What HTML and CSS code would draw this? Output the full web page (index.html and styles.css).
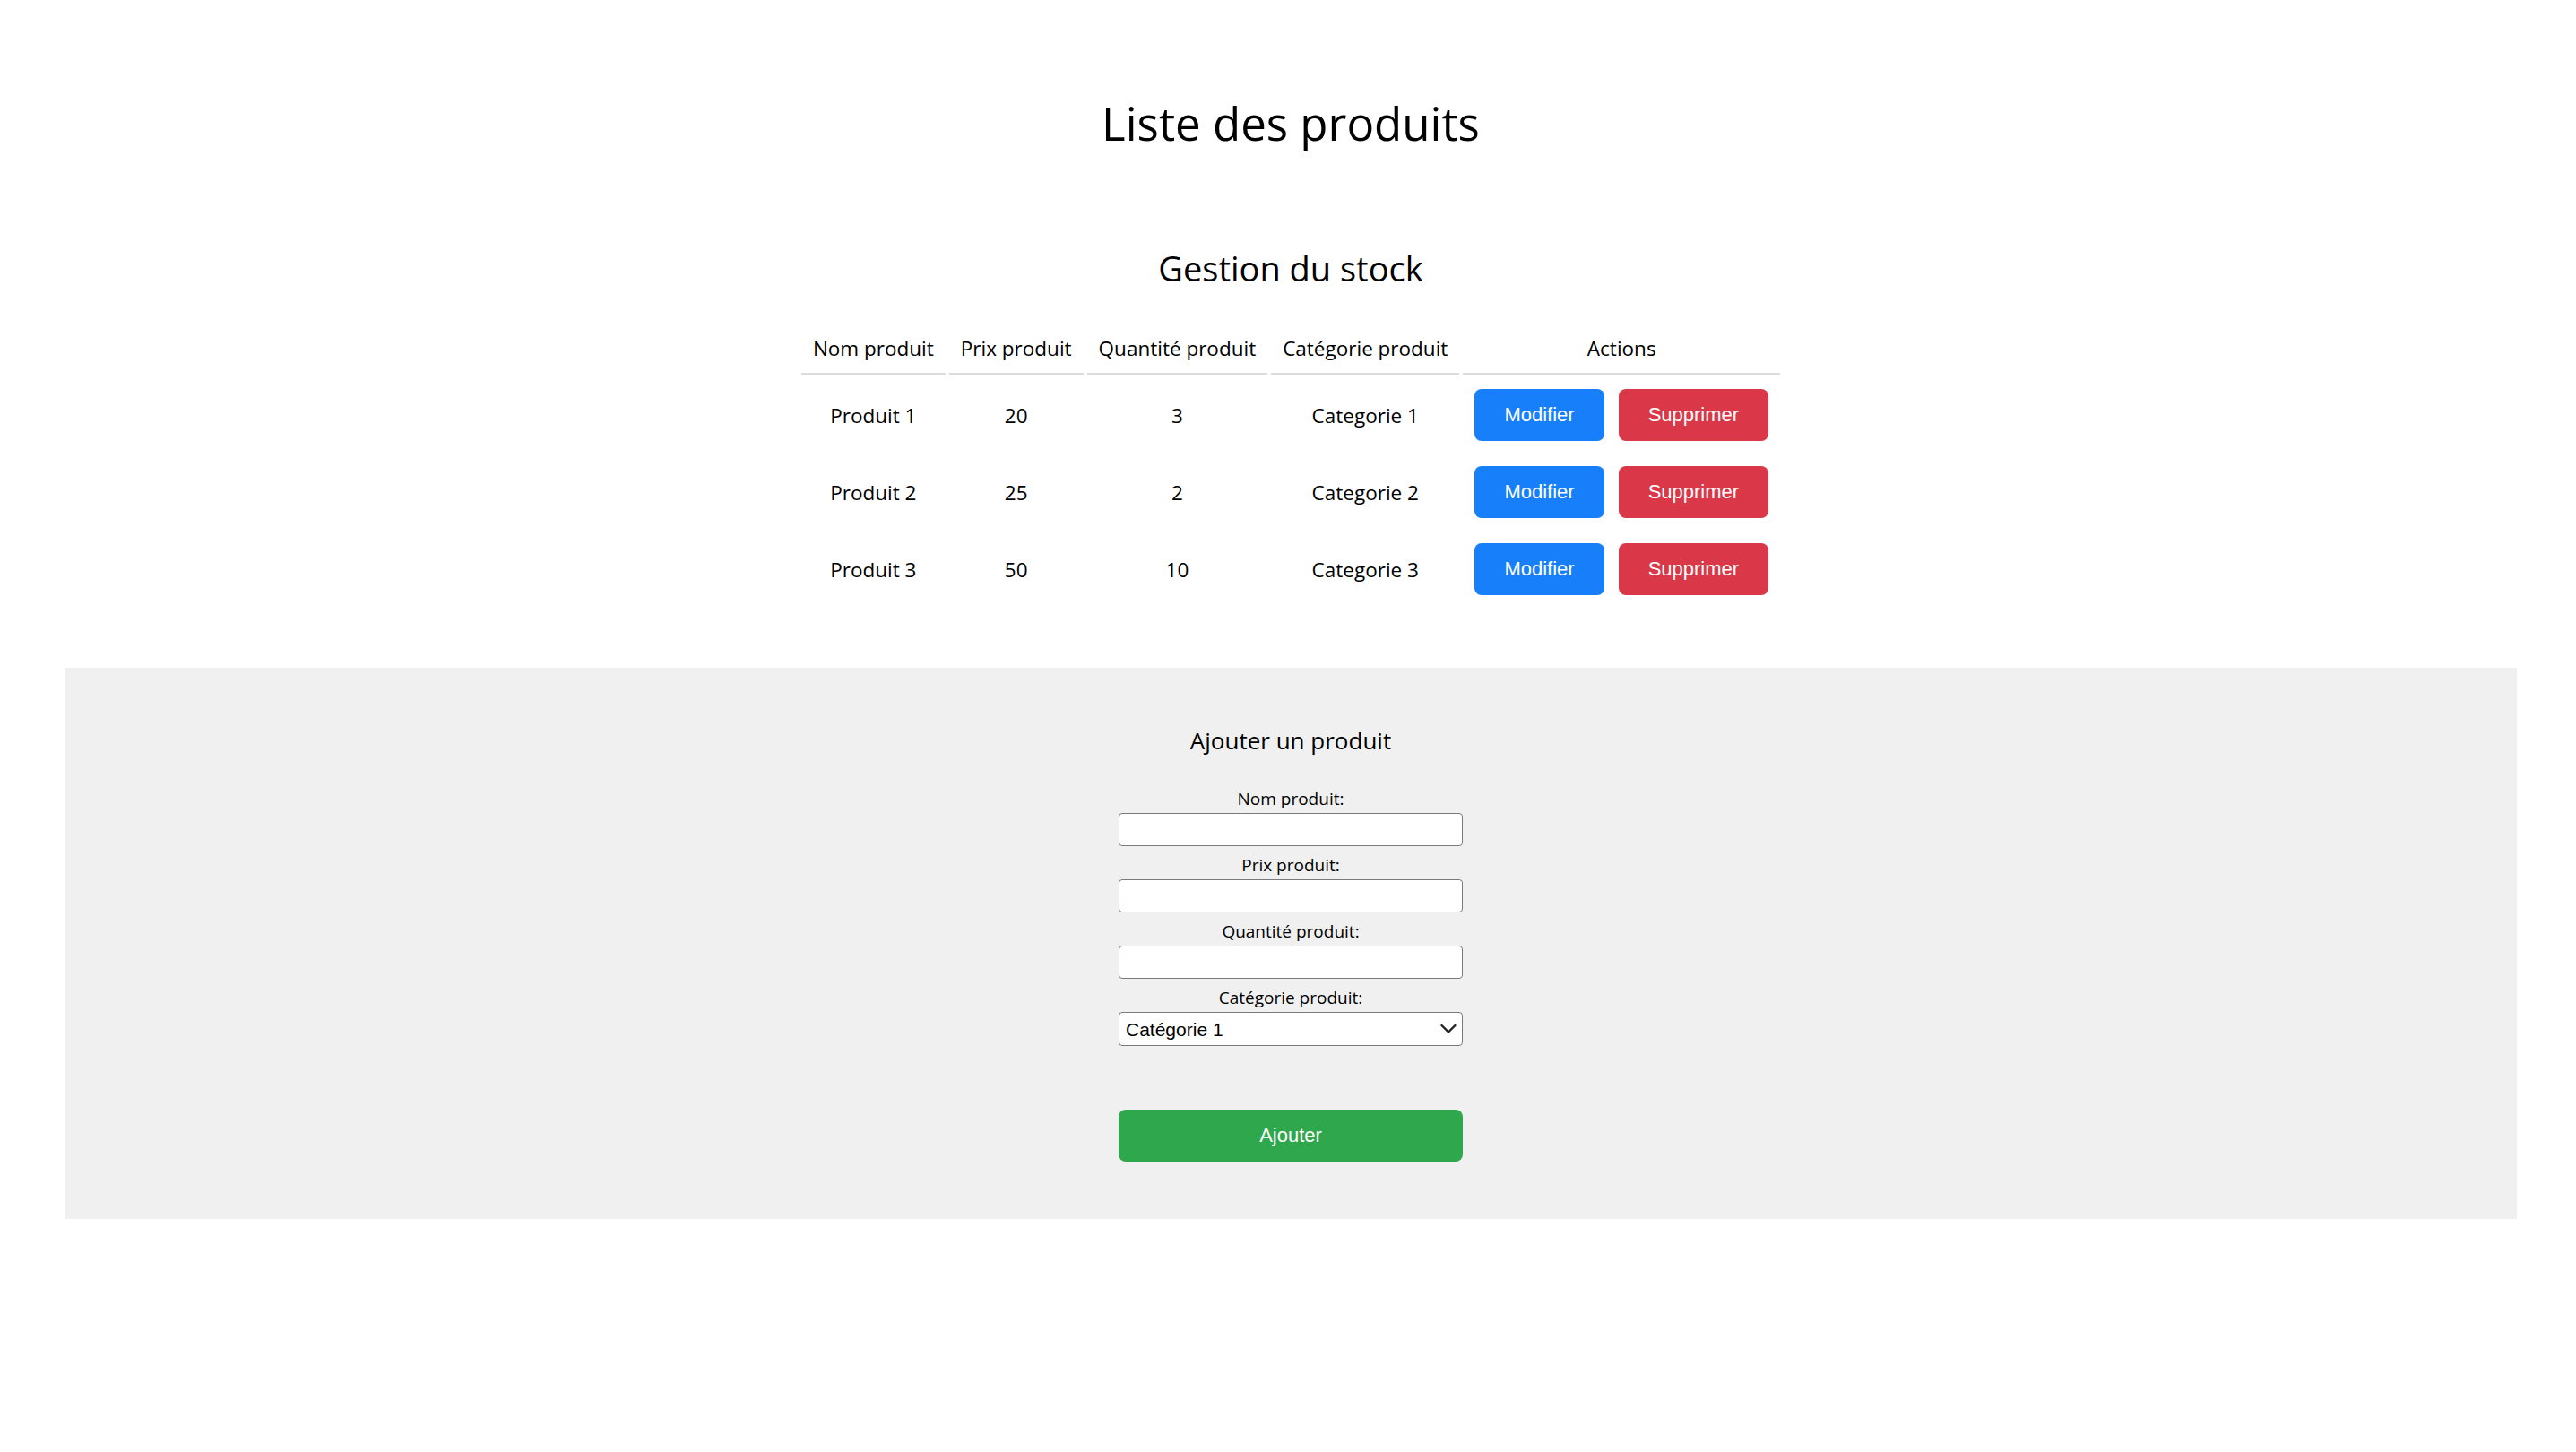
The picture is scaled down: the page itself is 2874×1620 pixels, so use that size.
FILE: index.html
```html
<!DOCTYPE html>
<html lang="fr">
<head>
<meta charset="utf-8">
<title>Liste des produits</title>
<link rel="stylesheet" href="styles.css">
</head>
<body>
  <h1 class="page-title">Liste des produits</h1>

  <section class="stock">
    <h2 class="stock-title">Gestion du stock</h2>
    <table class="stock-table">
      <thead>
        <tr>
          <th>Nom produit</th>
          <th>Prix produit</th>
          <th>Quantité produit</th>
          <th>Catégorie produit</th>
          <th>Actions</th>
        </tr>
      </thead>
      <tbody>
        <tr>
          <td>Produit 1</td>
          <td>20</td>
          <td>3</td>
          <td>Categorie 1</td>
          <td><div class="actions"><button class="btn btn-edit">Modifier</button><button class="btn btn-delete">Supprimer</button></div></td>
        </tr>
        <tr>
          <td>Produit 2</td>
          <td>25</td>
          <td>2</td>
          <td>Categorie 2</td>
          <td><div class="actions"><button class="btn btn-edit">Modifier</button><button class="btn btn-delete">Supprimer</button></div></td>
        </tr>
        <tr>
          <td>Produit 3</td>
          <td>50</td>
          <td>10</td>
          <td>Categorie 3</td>
          <td><div class="actions"><button class="btn btn-edit">Modifier</button><button class="btn btn-delete">Supprimer</button></div></td>
        </tr>
      </tbody>
    </table>
  </section>

  <section class="add-section">
    <h3 class="add-title">Ajouter un produit</h3>
    <form class="add-form">
      <label class="field-label" for="nom">Nom produit:</label>
      <input class="field-input" id="nom" type="text">
      <label class="field-label" for="prix">Prix produit:</label>
      <input class="field-input" id="prix" type="text">
      <label class="field-label" for="qte">Quantité produit:</label>
      <input class="field-input" id="qte" type="text">
      <label class="field-label" for="cat">Catégorie produit:</label>
      <div class="select-wrap">
        <select class="field-input field-select" id="cat">
          <option>Catégorie 1</option>
          <option>Catégorie 2</option>
          <option>Catégorie 3</option>
        </select>
        <svg class="select-chevron" width="18" height="12" viewBox="0 0 18 12" aria-hidden="true"><polyline points="1.5,2 9,9.5 16.5,2" fill="none" stroke="#222" stroke-width="2.4" stroke-linecap="round" stroke-linejoin="round"/></svg>
      </div>
      <button type="button" class="btn btn-add">Ajouter</button>
    </form>
  </section>
</body>
</html>
```

FILE: styles.css
```css
html, body {
  margin: 0;
  padding: 0;
}

body {
  font-family: "Open Sans", "Liberation Sans", sans-serif;
  color: #000;
  background: #fff;
  padding-left: 6px;
}

.page-title {
  font-size: 51px;
  font-weight: 400;
  text-align: center;
  margin: 102px 0 0;
}

.stock-title {
  font-size: 38px;
  font-weight: 400;
  text-align: center;
  margin: 101px 0 30px;
}

.stock-table {
  margin: 0 auto;
  border-collapse: separate;
  border-spacing: 4px;
  font-size: 22.5px;
}

.stock-table th {
  font-weight: 400;
  padding: 14px 13px 12px;
  border-bottom: 2px solid #dcdcdc;
  text-align: center;
}

.stock-table td {
  padding: 12px 13px;
  text-align: center;
}

.actions {
  display: flex;
  gap: 16px;
}

.btn {
  font-family: "Liberation Sans", Arial, sans-serif;
  font-size: 22px;
  color: #fff;
  border: none;
  border-radius: 8px;
  height: 58px;
  padding: 0 33px;
  cursor: pointer;
}

.btn-edit {
  background: #177ffa;
}

.btn-delete {
  background: #da3848;
}

.add-section {
  margin: 65px 66px 0;
  background: #f0f0f0;
  padding: 63px 0 64px;
  display: flex;
  flex-direction: column;
  align-items: center;
}

.add-title {
  font-size: 26px;
  font-weight: 400;
  margin: 0 0 26px;
}

.add-form {
  display: flex;
  flex-direction: column;
  align-items: center;
  width: 384px;
}

.field-label {
  display: block;
  font-size: 19px;
  margin: 8px 0 3px;
  text-align: center;
}

.field-input {
  display: block;
  box-sizing: border-box;
  width: 384px;
  height: 37px;
  border: 1px solid #7a7a7a;
  border-radius: 4px;
  background: #fff;
  margin: 0;
}

.select-wrap {
  position: relative;
  width: 384px;
}

.field-select {
  height: 38px;
  appearance: none;
  -webkit-appearance: none;
  font-family: "Liberation Sans", Arial, sans-serif;
  font-size: 21px;
  color: #000;
  padding: 0 30px 0 7px;
}

.select-chevron {
  position: absolute;
  right: 7px;
  top: 13px;
  pointer-events: none;
}

.btn-add {
  margin-top: 71px;
  width: 384px;
  padding: 0;
  background: #2fa74d;
}
```
